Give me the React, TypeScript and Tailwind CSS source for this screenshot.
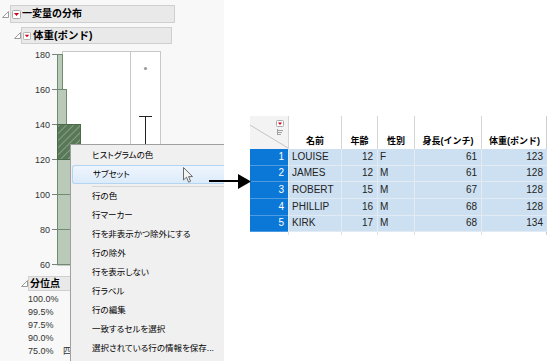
import React from "react";

const Disclose = () => (
  <svg width="7" height="7" viewBox="0 0 7 7" className="block shrink-0">
    <path d="M0.5 6.5 L6.5 0.5 L6.5 6.5 Z" fill="#fff" stroke="#9a9a9a" strokeWidth="1" />
  </svg>
);

const RedMenu = ({ size = 9 }: { size?: number }) => (
  <svg width={size} height={size} viewBox="0 0 9 9" className="block shrink-0">
    <rect x="0.5" y="0.5" width="8" height="8" rx="1" fill="#fff" stroke="#a8a8a8" />
    <path d="M2 3 L7 3 L4.5 6 Z" fill="#d0021b" />
  </svg>
);

const ticks = [180, 160, 140, 120, 100, 80, 60];
const yOf = (v: number) => 54 + (180 - v) * 1.75;

const Chart = () => (
  <svg width="224" height="230" viewBox="0 45 224 230" className="block">
    <defs>
      <pattern id="hatch" width="5" height="5" patternUnits="userSpaceOnUse" patternTransform="rotate(45)">
        <rect width="5" height="5" fill="#587858" />
        <line x1="0" y1="0" x2="0" y2="5" stroke="#86a086" strokeWidth="2" />
      </pattern>
    </defs>
    <rect x="62.5" y="51.5" width="98" height="213" fill="#fff" stroke="#c8c8c8" />
    <line x1="130.5" y1="51" x2="130.5" y2="265" stroke="#c8c8c8" />
    {ticks.map((t) => (
      <g key={t}>
        <line x1="52" y1={yOf(t) + 0.5} x2="57" y2={yOf(t) + 0.5} stroke="#808080" />
        <text x="50" y={yOf(t) + 3.5} textAnchor="end" fontSize="9" fill="#333" fontFamily="Liberation Sans, sans-serif">
          {t}
        </text>
      </g>
    ))}
    <rect x="57.5" y="159.5" width="60" height="35" fill="#b9cab9" stroke="#6f8c6f" />
    <rect x="57.5" y="194.5" width="70" height="35" fill="#b9cab9" stroke="#6f8c6f" />
    <rect x="57.5" y="229.5" width="40" height="35" fill="#b9cab9" stroke="#6f8c6f" />
    <rect x="57.5" y="54.5" width="5" height="35" fill="#b9cab9" stroke="#6f8c6f" />
    <rect x="57.5" y="89.5" width="9" height="35" fill="#b9cab9" stroke="#6f8c6f" />
    <rect x="57.5" y="124.5" width="23" height="35" fill="url(#hatch)" stroke="#4a6a4a" />
    <line x1="57" y1="265.5" x2="160" y2="265.5" stroke="#c8c8c8" />
    <circle cx="145.5" cy="68.5" r="1.6" fill="#9a9a9a" />
    <line x1="139" y1="116.5" x2="152" y2="116.5" stroke="#222" />
    <line x1="145.5" y1="116" x2="145.5" y2="200" stroke="#222" />
  </svg>
);

const menuItems = [
  "行の色",
  "行マーカー",
  "行を非表示かつ除外にする",
  "行の除外",
  "行を表示しない",
  "行ラベル",
  "行の編集",
  "一致するセルを選択",
  "選択されている行の情報を保存...",
];

const rows = [
  { n: 1, name: "LOUISE", age: 12, sex: "F", h: 61, w: 123 },
  { n: 2, name: "JAMES", age: 12, sex: "M", h: 61, w: 128 },
  { n: 3, name: "ROBERT", age: 15, sex: "M", h: 67, w: 128 },
  { n: 4, name: "PHILLIP", age: 16, sex: "M", h: 68, w: 128 },
  { n: 5, name: "KIRK", age: 17, sex: "M", h: 68, w: 134 },
];

const quantiles = ["100.0%", "99.5%", "97.5%", "90.0%"];

export default function App() {
  return (
    <div className="relative flex w-[553px] h-[361px] overflow-hidden bg-white font-['Liberation_Sans','Noto_Sans_CJK_JP',sans-serif] text-black">
      {/* left report panel */}
      <div className="w-[224px] h-full shrink-0 bg-[#f8f8f8] pt-[5px]">
        <div className="flex items-center">
          <div className="ml-[2px]">
            <Disclose />
          </div>
          <div className="ml-[1px] flex h-[18px] w-[165px] items-center gap-[1px] border border-[#cfcfcf] bg-[#e9e9e9] pl-[1px]">
            <RedMenu />
            <span className="text-[10px] font-bold leading-none">一変量の分布</span>
          </div>
        </div>
        <div className="mt-[4px] flex items-center pl-[14px]">
          <Disclose />
          <div className="flex h-[17px] w-[151px] items-center gap-[2px] border border-[#cfcfcf] bg-[#e9e9e9] pl-[1px]">
            <RedMenu size={8} />
            <span className="text-[10.5px] font-bold leading-none">体重(ポンド)</span>
          </div>
        </div>
        <div className="mt-[1px]">
          <Chart />
        </div>
        <div className="mt-[1px] flex h-[15px] items-center pl-[21px]">
          <Disclose />
          <div className="flex h-[15px] w-[60px] items-center border border-[#cfcfcf] bg-[#e9e9e9] pl-[1px]">
            <span className="text-[10px] font-bold leading-none">分位点</span>
          </div>
        </div>
        <div className="w-[71px] overflow-hidden pt-[2px] pl-[28px] text-[9px] text-[#333]">
          {quantiles.map((q) => (
            <div key={q} className="h-[13px] leading-[13px]">
              {q}
            </div>
          ))}
          <div className="flex h-[13px] leading-[13px]">
            <span className="w-[35px] shrink-0">75.0%</span>
            <span className="w-[8px] shrink-0 overflow-hidden whitespace-nowrap">四</span>
          </div>
        </div>
      </div>

      {/* data table */}
      <div className="pl-[26px] pt-[116px]">
        <div className="w-[297px] border-r border-[#cfcfcf] text-[10px]">
          <div className="flex h-[33px] bg-white">
            <div className="w-[38px] shrink-0 bg-[#f3f3f3]">
              <svg width="38" height="33" viewBox="0 0 38 33" className="block">
                <line x1="0" y1="9" x2="38" y2="32" stroke="#c4c4c4" />
                <rect x="26.5" y="4.5" width="7" height="6" rx="1" fill="#fff" stroke="#a8a8a8" />
                <path d="M28 6.5 L32 6.5 L30 9 Z" fill="#d0021b" />
                <line x1="27.5" y1="13" x2="27.5" y2="19" stroke="#a0a0a0" />
                <line x1="28" y1="14.5" x2="33" y2="14.5" stroke="#a0a0a0" />
                <line x1="28" y1="16.5" x2="32" y2="16.5" stroke="#a0a0a0" />
                <line x1="28" y1="18.5" x2="31" y2="18.5" stroke="#a0a0a0" />
              </svg>
            </div>
            {[
              ["名前", "w-[53px]"],
              ["年齢", "w-[36px]"],
              ["性別", "w-[37px]"],
              ["身長(インチ)", "w-[67px]"],
              ["体重(ポンド)", "w-[66px]"],
            ].map(([label, w]) => (
              <div
                key={label}
                className={`${w} flex shrink-0 items-end justify-center border-l border-[#d6d6d6] pb-[3px] text-[9px] font-bold leading-none`}
              >
                {label}
              </div>
            ))}
          </div>
          {rows.map((r) => (
            <div key={r.n} className="flex h-[16.67px] text-[10px] leading-none">
              <div className="flex w-[38px] shrink-0 items-center justify-end border-b border-[#4d9be2] bg-[#0b77d6] pr-[4px] text-white">
                {r.n}
              </div>
              <div className="flex w-[53px] shrink-0 items-center border-b border-l border-[#e2ebf4] bg-[#cce0f2] pl-[3px] text-[#222]">
                {r.name}
              </div>
              <div className="flex w-[36px] shrink-0 items-center justify-end border-b border-l border-[#e2ebf4] bg-[#cce0f2] pr-[4px] text-[#222]">
                {r.age}
              </div>
              <div className="flex w-[37px] shrink-0 items-center border-b border-l border-[#e2ebf4] bg-[#cce0f2] pl-[2px] text-[#222]">
                {r.sex}
              </div>
              <div className="flex w-[67px] shrink-0 items-center justify-end border-b border-l border-[#e2ebf4] bg-[#cce0f2] pr-[4px] text-[#222]">
                {r.h}
              </div>
              <div className="flex w-[66px] shrink-0 items-center justify-end border-b border-l border-[#e2ebf4] bg-[#cce0f2] pr-[4px] text-[#222]">
                {r.w}
              </div>
            </div>
          ))}
          <div className="flex h-[3px]">
            <div className="w-[38px] shrink-0" />
            <div className="w-[53px] shrink-0 border-l border-[#e0e0e0]" />
            <div className="w-[36px] shrink-0 border-l border-[#e0e0e0]" />
            <div className="w-[37px] shrink-0 border-l border-[#e0e0e0]" />
            <div className="w-[67px] shrink-0 border-l border-[#e0e0e0]" />
            <div className="w-[66px] shrink-0 border-l border-[#e0e0e0]" />
          </div>
        </div>
      </div>

      {/* context menu */}
      <div className="absolute left-[70px] top-[144px] h-[217px] w-[154px] border-l border-t border-[#a0a0a0] bg-[#f0f0f0] pt-[1px] text-[8.5px] [font-feature-settings:'palt']">
        <div className="flex h-[19px] items-center pl-[21px]">ヒストグラムの色</div>
        <div className="ml-[1px] flex h-[19px] items-center rounded-l-[3px] border border-r-0 border-[#b3d4f2] bg-gradient-to-b from-[#eef5fd] to-[#dcebfa] pl-[20px]">
          サブセット
        </div>
        <div className="ml-[21px] h-[3px] border-b border-[#d5d5d5]" />
        {menuItems.map((m) => (
          <div key={m} className="flex h-[19px] items-center pl-[21px]">
            {m}
          </div>
        ))}
      </div>

      {/* mouse cursor */}
      <svg width="11" height="17" viewBox="0 0 11 17" className="absolute left-[183px] top-[167px]">
        <path d="M0.5 0.5 L0.5 13 L3.5 10.2 L5.6 15.2 L7.6 14.3 L5.6 9.6 L9.5 9.6 Z" fill="#f4f4f4" stroke="#6a6a6a" strokeWidth="1" />
      </svg>

      {/* arrow to table */}
      <div className="absolute left-[209px] top-[180px] h-[1.5px] w-[30px] bg-black" />
      <svg width="13" height="15" viewBox="0 0 13 15" className="absolute left-[238px] top-[174px]">
        <path d="M0 0 L13 7.5 L0 15 Z" fill="#000" />
      </svg>
    </div>
  );
}
